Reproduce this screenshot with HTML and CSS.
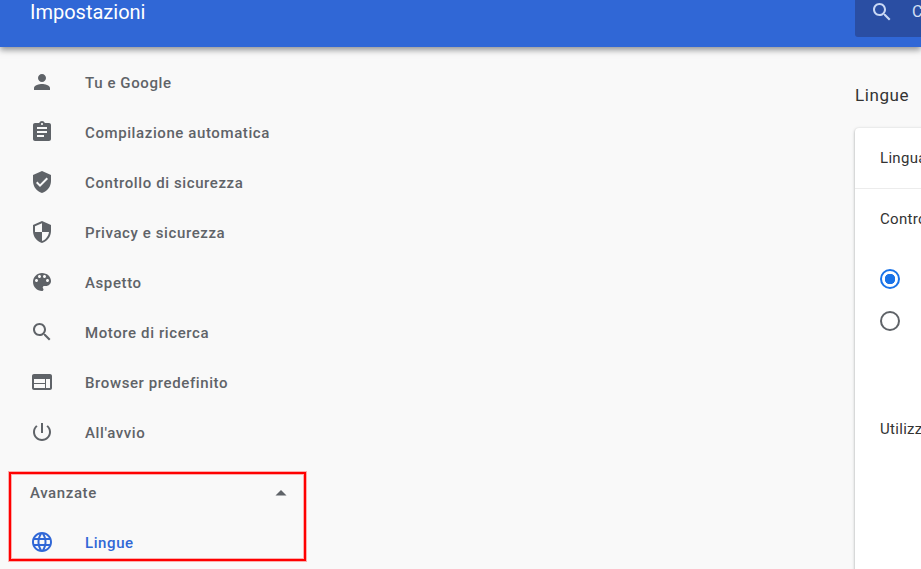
FILE: index.html
```html
<!DOCTYPE html>
<html lang="it">
<head>
<meta charset="utf-8">
<title>Impostazioni</title>
<link rel="stylesheet" href="styles.css">
</head>
<body>
<header class="topbar">
  <h1 class="title">Impostazioni</h1>
  <div class="search">
    <svg class="search-icon" viewBox="0 0 24 24"><path d="M15.5 14h-.79l-.28-.27C15.41 12.59 16 11.11 16 9.5 16 5.91 13.09 3 9.5 3S3 5.91 3 9.5 5.91 16 9.5 16c1.61 0 3.09-.59 4.23-1.57l.27.28v.79l5 4.99L20.49 19l-4.99-5zm-6 0C7.01 14 5 11.99 5 9.5S7.01 5 9.5 5 14 7.01 14 9.5 11.99 14 9.5 14z"/></svg>
    <span class="search-text">Cerca nelle impostazioni</span>
  </div>
</header>
<div class="layout">
  <nav class="sidebar">
    <a class="nav-item"><svg class="icon" viewBox="0 0 24 24"><path d="M12 12c2.21 0 4-1.79 4-4s-1.79-4-4-4-4 1.79-4 4 1.79 4 4 4zm0 2c-2.67 0-8 1.34-8 4v2h16v-2c0-2.66-5.33-4-8-4z"/></svg><span>Tu e Google</span></a>
    <a class="nav-item"><svg class="icon" viewBox="0 0 24 24"><path d="M19 3h-4.18C14.4 1.84 13.3 1 12 1c-1.3 0-2.4.84-2.82 2H5c-1.1 0-2 .9-2 2v14c0 1.1.9 2 2 2h14c1.1 0 2-.9 2-2V5c0-1.1-.9-2-2-2zm-7 0c.55 0 1 .45 1 1s-.45 1-1 1-1-.45-1-1 .45-1 1-1zm2 14H7v-2h7v2zm3-4H7v-2h10v2zm0-4H7V7h10v2z"/></svg><span>Compilazione automatica</span></a>
    <a class="nav-item"><svg class="icon" viewBox="0 0 24 24"><path d="M12 1L3 5v6c0 5.55 3.84 10.74 9 12 5.16-1.26 9-6.45 9-12V5l-9-4zm-2 16l-4-4 1.41-1.41L10 14.17l6.59-6.59L18 9l-8 8z"/></svg><span>Controllo di sicurezza</span></a>
    <a class="nav-item"><svg class="icon" viewBox="0 0 24 24"><path d="M12 1L3 5v6c0 5.55 3.84 10.74 9 12 5.16-1.26 9-6.45 9-12V5l-9-4zm0 10.99h7c-.53 4.12-3.28 7.79-7 8.94V12H5V6.3l7-3.11v8.8z"/></svg><span>Privacy e sicurezza</span></a>
    <a class="nav-item"><svg class="icon" viewBox="0 0 24 24"><path d="M12 3c-4.97 0-9 4.03-9 9s4.03 9 9 9c.83 0 1.5-.67 1.5-1.5 0-.39-.15-.74-.39-1.01-.23-.26-.38-.61-.38-.99 0-.83.67-1.5 1.5-1.5H16c2.76 0 5-2.24 5-5 0-4.42-4.03-8-9-8zm-5.5 9c-.83 0-1.5-.67-1.5-1.5S5.67 9 6.5 9 8 9.67 8 10.5 7.33 12 6.5 12zm3-4C8.67 8 8 7.33 8 6.5S8.67 5 9.5 5s1.5.67 1.5 1.5S10.33 8 9.5 8zm5 0c-.83 0-1.5-.67-1.5-1.5S13.67 5 14.5 5s1.5.67 1.5 1.5S15.33 8 14.5 8zm3 4c-.83 0-1.5-.67-1.5-1.5S16.67 9 17.5 9s1.5.67 1.5 1.5-.67 1.5-1.5 1.5z"/></svg><span>Aspetto</span></a>
    <a class="nav-item"><svg class="icon" viewBox="0 0 24 24"><path d="M15.5 14h-.79l-.28-.27C15.41 12.59 16 11.11 16 9.5 16 5.91 13.09 3 9.5 3S3 5.91 3 9.5 5.91 16 9.5 16c1.61 0 3.09-.59 4.23-1.57l.27.28v.79l5 4.99L20.49 19l-4.99-5zm-6 0C7.01 14 5 11.99 5 9.5S7.01 5 9.5 5 14 7.01 14 9.5 11.99 14 9.5 14z"/></svg><span>Motore di ricerca</span></a>
    <a class="nav-item"><svg class="icon" viewBox="0 0 24 24"><path d="M20 4H4c-1.1 0-1.99.9-1.99 2L2 18c0 1.1.9 2 2 2h16c1.1 0 2-.9 2-2V6c0-1.1-.9-2-2-2zm-5 14H4v-4h11v4zm0-5H4V9h11v4zm5 5h-4V9h4v9z"/></svg><span>Browser predefinito</span></a>
    <a class="nav-item"><svg class="icon" viewBox="0 0 24 24"><path d="M13 3h-2v10h2V3zm4.83 2.17l-1.42 1.42C17.99 7.86 19 9.81 19 12c0 3.87-3.13 7-7 7s-7-3.13-7-7c0-2.19 1.01-4.14 2.58-5.42L6.17 5.17C4.23 6.82 3 9.26 3 12c0 4.97 4.03 9 9 9s9-4.03 9-9c0-2.74-1.23-5.18-3.17-6.83z"/></svg><span>All'avvio</span></a>
    <section class="advanced">
      <div class="advanced-head">
        <span>Avanzate</span>
        <svg class="caret" viewBox="0 0 24 24"><path d="M6.5 14.5l5.5-5.5 5.5 5.5z"/></svg>
      </div>
      <a class="nav-item nav-item-active"><svg class="icon" viewBox="0 0 24 24"><path d="M11.99 2C6.47 2 2 6.48 2 12s4.47 10 9.99 10C17.52 22 22 17.52 22 12S17.52 2 11.99 2zm6.93 6h-2.95c-.32-1.25-.78-2.45-1.38-3.56 1.84.63 3.37 1.91 4.33 3.56zM12 4.04c.83 1.2 1.48 2.53 1.91 3.96h-3.82c.43-1.43 1.08-2.76 1.91-3.96zM4.26 14C4.1 13.36 4 12.69 4 12s.1-1.36.26-2h3.38c-.08.66-.14 1.32-.14 2 0 .68.06 1.34.14 2H4.26zm.82 2h2.95c.32 1.25.78 2.45 1.38 3.56-1.84-.63-3.37-1.9-4.33-3.56zm2.95-8H5.08c.96-1.66 2.49-2.93 4.33-3.56C8.81 5.55 8.35 6.75 8.03 8zM12 19.96c-.83-1.2-1.48-2.53-1.91-3.96h3.82c-.43 1.43-1.08 2.76-1.91 3.96zM14.34 14H9.66c-.09-.66-.16-1.32-.16-2 0-.68.07-1.35.16-2h4.68c.09.65.16 1.32.16 2 0 .68-.07 1.34-.16 2zm.25 5.56c.6-1.11 1.06-2.31 1.38-3.56h2.95c-.96 1.65-2.49 2.93-4.33 3.56zM16.36 14c.08-.66.14-1.32.14-2 0-.68-.06-1.34-.14-2h3.38c.16.64.26 1.31.26 2s-.1 1.36-.26 2h-3.38z"/></svg><span>Lingue</span></a>
    </section>
  </nav>
  <main class="content">
    <h2 class="section-title">Lingue</h2>
    <div class="card">
      <div class="card-row">Lingua</div>
      <div class="card-body">
        <p class="label">Controllo ortografico</p>
        <div class="radios">
          <span class="radio radio-on"></span>
          <span class="radio"></span>
        </div>
        <p class="label label-use">Utilizza il controllo ortografico</p>
      </div>
    </div>
  </main>
</div>
</body>
</html>
```
FILE: styles.css
```css
* { box-sizing: border-box; }
html, body { height: 100%; }
body {
  margin: 0;
  width: 921px;
  height: 569px;
  overflow: hidden;
  display: flex;
  flex-direction: column;
  background: #f9f9f9;
  font-family: Roboto, "Liberation Sans", sans-serif;
  color: #333;
}
.topbar {
  flex: none;
  height: 47px;
  display: flex;
  justify-content: space-between;
  align-items: flex-start;
  padding-left: 30px;
  background: #3067d6;
  box-shadow: 0 3px 6px rgba(60, 64, 67, 0.55);
  position: relative;
  z-index: 1;
}
.title {
  margin: 0;
  font-size: 20px;
  font-weight: 400;
  line-height: 24px;
  color: #fff;
}
.search {
  width: 66px;
  height: 37px;
  display: flex;
  align-items: flex-start;
  gap: 18px;
  padding: 0 0 0 15px;
  background: #2a4ea3;
  border-bottom-left-radius: 3px;
  overflow: hidden;
  white-space: nowrap;
  color: #d5e0f5;
  font-size: 16px;
  line-height: 23px;
}
.search-icon { flex: none; width: 24px; height: 24px; fill: #c9d8f5; }
.search-text { flex: none; }
.layout { flex: 1; display: flex; min-height: 0; }
.sidebar {
  flex: none;
  width: 855px;
  padding-top: 10px;
}
.nav-item {
  display: flex;
  align-items: center;
  width: 320px;
  height: 50px;
  padding-left: 30px;
  font-size: 15px;
  font-weight: 500;
  letter-spacing: 0.6px;
  color: #5f6368;
}
.nav-item span { padding-top: 2px; }
.icon { flex: none; width: 24px; height: 24px; margin-right: 31px; fill: #5f6368; }
.advanced {
  width: 297px;
  height: 89px;
  margin: 15px 0 0 9px;
  padding: 1px;
  border: 2px solid #f00;
  box-shadow: 0 0 0 1px rgba(255, 0, 0, 0.3), inset 0 0 0 1px rgba(255, 0, 0, 0.3);
}
.advanced .nav-item {
  width: auto;
  height: 32px;
  margin-top: 15px;
  padding-left: 18px;
}
.advanced-head {
  display: flex;
  justify-content: space-between;
  align-items: center;
  height: 36px;
  padding: 0 10px 0 18px;
  font-size: 15px;
  font-weight: 500;
  letter-spacing: 0.6px;
  color: #5f6368;
}
.caret { width: 24px; height: 24px; fill: #5f6368; }
.nav-item-active { color: #3067d6; }
.nav-item-active .icon { fill: #3067d6; }
.content { flex: none; width: 680px; }
.section-title {
  margin: 36px 0 21px;
  font-size: 17px;
  font-weight: 400;
  letter-spacing: 0.6px;
  line-height: 24px;
  color: #333;
  white-space: nowrap;
}
.card {
  height: 500px;
  background: #fff;
  border-radius: 4px;
  box-shadow: 0 1px 2px rgba(60, 64, 67, 0.3), 0 1px 3px 1px rgba(60, 64, 67, 0.15);
  white-space: nowrap;
  font-size: 15px;
  letter-spacing: 0.3px;
}
.card-row {
  height: 61px;
  padding: 0 25px;
  display: flex;
  align-items: center;
  border-bottom: 1px solid #ececec;
}
.card-body { padding: 20px 25px 0; }
.label { margin: 0; line-height: 20px; color: #333; }
.radios {
  display: flex;
  flex-direction: column;
  gap: 22px;
  margin-top: 40px;
}
.radio {
  display: block;
  width: 20px;
  height: 20px;
  border: 2px solid #5f6368;
  border-radius: 50%;
}
.radio-on {
  border-color: #1a73e8;
  background: radial-gradient(circle, #1a73e8 0, #1a73e8 5px, transparent 5.5px);
}
.label-use { margin-top: 88px; }
```
